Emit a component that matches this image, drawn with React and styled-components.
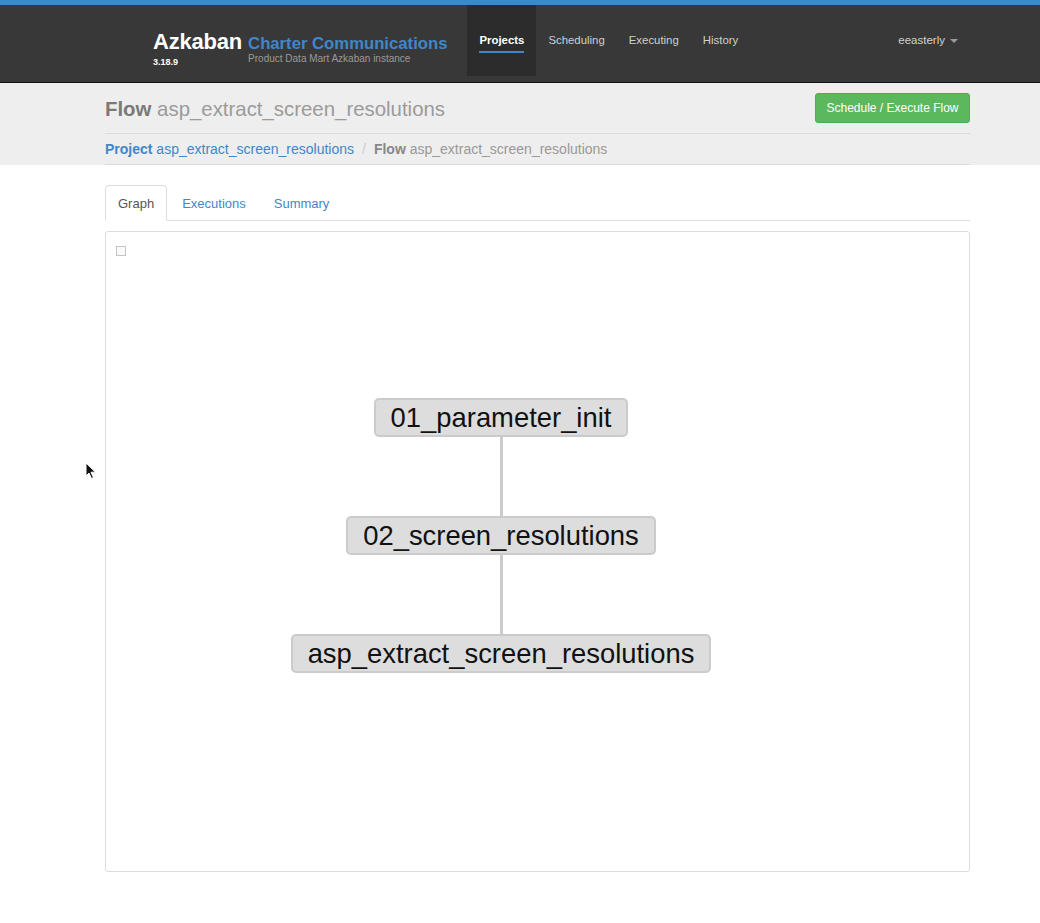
import React from "react";
import styled, { createGlobalStyle } from "styled-components";

const GlobalStyle = createGlobalStyle`
  html, body {
    margin: 0;
    padding: 0;
    background: #ffffff;
    font-family: "Liberation Sans", Arial, Helvetica, sans-serif;
  }
`;

const Page = styled.div`
  position: relative;
  width: 1040px;
  min-height: 923px;
  background: #fff;
`;

const TopStrip = styled.div`
  height: 5px;
  background: #3f87c9;
`;

const Navbar = styled.div`
  height: 77px;
  background: #383838;
  border-bottom: 1px solid #111;
`;

const NavInner = styled.div`
  width: 817px;
  margin-left: 153px;
  height: 100%;
  display: flex;
  align-items: flex-start;
`;

const Brand = styled.div`
  display: flex;
  flex-direction: column;
  padding-top: 26px;
`;

const BrandRow = styled.div`
  display: flex;
  align-items: flex-start;
  gap: 6px;
`;

const BrandName = styled.div`
  color: #fff;
  font-size: 22px;
  font-weight: bold;
  line-height: 22px;
  letter-spacing: -0.2px;
`;

const Version = styled.div`
  color: #fff;
  font-size: 9px;
  font-weight: bold;
  margin-top: 4px;
`;

const Org = styled.div`
  display: flex;
  flex-direction: column;
  padding-top: 4px;
`;

const OrgName = styled.div`
  color: #3f87c9;
  font-size: 16.7px;
  font-weight: bold;
  line-height: 17px;
`;

const OrgSub = styled.div`
  color: #9a9a9a;
  font-size: 10px;
  line-height: 13px;
`;

const NavList = styled.ul`
  list-style: none;
  margin: 0 0 0 20px;
  padding: 0;
  display: flex;
  height: 71px;
`;

const NavItem = styled.li`
  padding: 29px 12px 0;
  background: ${({ $active }) => ($active ? "#2c2c2c" : "transparent")};
  display: flex;
  flex-direction: column;
  align-items: center;
`;

const NavLabel = styled.span`
  color: ${({ $active }) => ($active ? "#fff" : "#d0d0d0")};
  font-size: 11.4px;
  font-weight: ${({ $active }) => ($active ? "bold" : "normal")};
  line-height: 13px;
  padding-bottom: 4px;
  border-bottom: 2px solid
    ${({ $active }) => ($active ? "#3f87c9" : "transparent")};
`;

const UserMenu = styled.div`
  margin-left: auto;
  margin-right: 12px;
  padding-top: 29px;
  display: flex;
  align-items: center;
  gap: 5px;
  color: #d0d0d0;
  font-size: 11.5px;
  line-height: 13px;
`;

const Caret = styled.span`
  width: 0;
  height: 0;
  border-left: 4px solid transparent;
  border-right: 4px solid transparent;
  border-top: 4px solid #9a9a9a;
`;

const HeaderBand = styled.div`
  background: #eeeeee;
`;

const Container = styled.div`
  width: 865px;
  margin-left: 105px;
`;

const TitleRow = styled.div`
  height: 50px;
  display: flex;
  align-items: center;
  justify-content: space-between;
  border-bottom: 1px solid #dcdcdc;
`;

const FlowTitle = styled.h1`
  margin: 3px 0 0;
  font-size: 20.4px;
  font-weight: normal;
  color: #9b9b9b;
  b {
    color: #7a7a7a;
  }
`;

const PrimaryButton = styled.button`
  background: #5cb85c;
  border: 1px solid #4cae4c;
  border-radius: 3px;
  color: #fff;
  font-family: inherit;
  font-size: 12px;
  height: 30px;
  width: 155px;
  padding: 0;
  margin-top: -1px;
`;

const Crumbs = styled.div`
  height: 30px;
  display: flex;
  align-items: center;
  font-size: 14px;
  border-bottom: 1px solid #dcdcdc;
`;

const Crumb = styled.span`
  color: ${({ $muted }) => ($muted ? "#999" : "#3f87c9")};
  b {
    color: ${({ $muted }) => ($muted ? "#888" : "#3f87c9")};
  }
`;

const Sep = styled.span`
  color: #ccc;
  margin: 0 8px;
`;

const Body = styled.div`
  padding-top: 20px;
`;

const Tabs = styled.div`
  display: flex;
  border-bottom: 1px solid #dddddd;
  height: 35px;
`;

const Tab = styled.div`
  padding: 0 12px;
  margin-right: 2px;
  display: flex;
  align-items: center;
  font-size: 13px;
  color: ${({ $active }) => ($active ? "#555" : "#3f87c9")};
  background: ${({ $active }) => ($active ? "#fff" : "transparent")};
  border: 1px solid ${({ $active }) => ($active ? "#ddd" : "transparent")};
  border-bottom-color: ${({ $active }) => ($active ? "#fff" : "transparent")};
  border-radius: 4px 4px 0 0;
  margin-bottom: -1px;
`;

const GraphPanel = styled.div`
  margin-top: 10px;
  height: 641px;
  border: 1px solid #dddddd;
  border-radius: 3px;
  padding: 14px 10px;
  box-sizing: border-box;
`;

const CheckBox = styled.div`
  width: 8px;
  height: 8px;
  border: 1px solid #c4c4c4;
  background: #fafafa;
`;

const Graph = styled.div`
  margin: 142px 0 0 -9px;
  padding-right: 64px;
  display: flex;
  flex-direction: column;
  align-items: center;
`;

const Node = styled.div`
  height: 35px;
  padding: 0 15px;
  display: flex;
  align-items: center;
  background: #dddddd;
  border: 2px solid #cbcbcb;
  border-radius: 5px;
  font-size: 27.4px;
  color: #111;
  white-space: nowrap;
`;

const Edge = styled.div`
  width: 3px;
  height: 79px;
  background: #cccccc;
`;

const Cursor = styled.svg`
  position: absolute;
  left: 85px;
  top: 462px;
`;

const navItems = ["Projects", "Scheduling", "Executing", "History"];
const nodes = [
  "01_parameter_init",
  "02_screen_resolutions",
  "asp_extract_screen_resolutions",
];

export default function App() {
  return (
    <Page>
      <GlobalStyle />
      <TopStrip />
      <Navbar>
        <NavInner>
          <Brand>
            <BrandRow>
              <div>
                <BrandName>Azkaban</BrandName>
                <Version>3.18.9</Version>
              </div>
              <Org>
                <OrgName>Charter Communications</OrgName>
                <OrgSub>Product Data Mart Azkaban instance</OrgSub>
              </Org>
            </BrandRow>
          </Brand>
          <NavList>
            {navItems.map((item, i) => (
              <NavItem key={item} $active={i === 0}>
                <NavLabel $active={i === 0}>{item}</NavLabel>
              </NavItem>
            ))}
          </NavList>
          <UserMenu>
            eeasterly <Caret />
          </UserMenu>
        </NavInner>
      </Navbar>
      <HeaderBand>
        <Container>
          <TitleRow>
            <FlowTitle>
              <b>Flow</b> asp_extract_screen_resolutions
            </FlowTitle>
            <PrimaryButton>Schedule / Execute Flow</PrimaryButton>
          </TitleRow>
          <Crumbs>
            <Crumb>
              <b>Project</b> asp_extract_screen_resolutions
            </Crumb>
            <Sep>/</Sep>
            <Crumb $muted>
              <b>Flow</b> asp_extract_screen_resolutions
            </Crumb>
          </Crumbs>
        </Container>
      </HeaderBand>
      <Container>
        <Body>
          <Tabs>
            <Tab $active>Graph</Tab>
            <Tab>Executions</Tab>
            <Tab>Summary</Tab>
          </Tabs>
          <GraphPanel>
            <CheckBox />
            <Graph>
              {nodes.map((n, i) => (
                <React.Fragment key={n}>
                  {i > 0 && <Edge />}
                  <Node>{n}</Node>
                </React.Fragment>
              ))}
            </Graph>
          </GraphPanel>
        </Body>
      </Container>
      <Cursor width="12" height="18" viewBox="0 0 12 18">
        <path
          d="M1 1 L1 14 L4 11 L6.5 16.5 L8.5 15.6 L6 10.2 L10.5 10.2 Z"
          fill="#111"
          stroke="#fff"
          strokeWidth="1"
        />
      </Cursor>
    </Page>
  );
}
